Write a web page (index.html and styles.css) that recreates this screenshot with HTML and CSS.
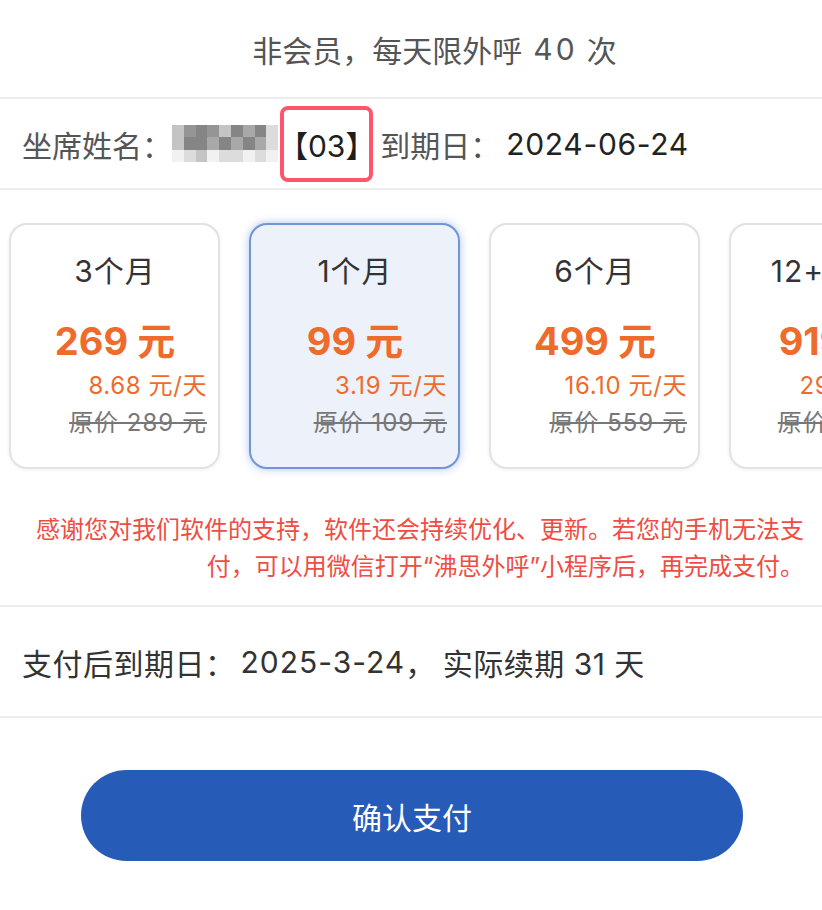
FILE: index.html
```html
<!DOCTYPE html>
<html lang="zh-CN">
<head>
<meta charset="utf-8">
<link rel="stylesheet" href="styles.css">
</head>
<body>
<div class="page">
  <div class="limit">非会员，每天限外呼<span class="count">40</span>次</div>
  <div class="divider"></div>
  <div class="seat">
    <span class="label">坐席姓名：</span>
    <span class="mosaic">
      <i class="m2"></i><i class="m4"></i><i class="m5"></i><i class="m4"></i><i class="m2"></i><i class="m5"></i><i class="m3"></i><i class="m5"></i><i class="m1"></i>
      <i class="m2"></i><i class="m5"></i><i class="m5"></i><i class="m3"></i><i class="m5"></i><i class="m3"></i><i class="m5"></i><i class="m3"></i><i class="m1"></i>
      <i class="m0"></i><i class="m1"></i><i class="m2"></i><i class="m0"></i><i class="m1"></i><i class="m1"></i><i class="m0"></i><i class="m1"></i><i class="m0"></i>
    </span>
    <span class="code">【03】</span>
    <span class="label">到期日：</span>
    <span class="date">2024-06-24</span>
  </div>
  <div class="divider"></div>
  <div class="plans">
    <div class="plan">
      <div class="plan-name">3个月</div>
      <div class="plan-price">269 元</div>
      <div class="plan-day">8.68 元/天</div>
      <div class="plan-orig">原价 289 元</div>
    </div>
    <div class="plan selected">
      <div class="plan-name">1个月</div>
      <div class="plan-price">99 元</div>
      <div class="plan-day">3.19 元/天</div>
      <div class="plan-orig">原价 109 元</div>
    </div>
    <div class="plan">
      <div class="plan-name">6个月</div>
      <div class="plan-price">499 元</div>
      <div class="plan-day">16.10 元/天</div>
      <div class="plan-orig">原价 559 元</div>
    </div>
    <div class="plan">
      <div class="plan-name">12+1个月</div>
      <div class="plan-price">919 元</div>
      <div class="plan-day">29.10 元/月</div>
      <div class="plan-orig">原价 1099 元</div>
    </div>
  </div>
  <div class="notice">感谢您对我们软件的支持，软件还会持续优化、更新。若您的手机无法支付，可以用微信打开“沸思外呼”小程序后，再完成支付。</div>
  <div class="divider"></div>
  <div class="after">支付后到期日：<span class="after-date">2025-3-24</span>，<span class="after-days">实际续期 31 天</span></div>
  <div class="divider"></div>
  <div class="action">
    <button class="pay">确认支付</button>
  </div>
</div>
</body>
</html>
```

FILE: styles.css
```css
* { box-sizing: border-box; }
html, body {
  margin: 0;
  padding: 0;
  background: #fff;
}
body {
  font-family: "Inter", "Noto Sans CJK SC", sans-serif;
  color: #333;
}
.page {
  width: 822px;
  overflow: hidden;
}
.divider {
  height: 2px;
  background: #ededed;
}
.limit {
  height: 97px;
  display: flex;
  align-items: center;
  justify-content: center;
  padding-left: 47px;
  font-size: 30px;
  color: #555;
}
.count {
  padding: 0 9px 0 11px;
  letter-spacing: 3px;
}
.seat {
  height: 89px;
  display: flex;
  align-items: center;
  padding-left: 22px;
  font-size: 30px;
}
.label { color: #555; }
.date {
  color: #222;
  margin-left: 6px;
  letter-spacing: 0.7px;
}
.mosaic {
  display: grid;
  grid-template-columns: repeat(9, 11.8px);
  grid-template-rows: repeat(3, 12.5px);
  margin-left: 0;
  margin-right: 2px;
}
.mosaic i { display: block; }
.m0 { background: #f1f1f1; }
.m1 { background: #dcdcdc; }
.m2 { background: #c4c4c4; }
.m3 { background: #a8a8a8; }
.m4 { background: #959595; }
.m5 { background: #858585; }
.code {
  color: #1e1e1e;
  border: 4px solid #ff5469;
  border-radius: 8px;
  height: 76px;
  width: 93px;
  display: flex;
  align-items: center;
  justify-content: center;
  margin-right: 7px;
}
.plans {
  display: flex;
  gap: 29px;
  padding: 33px 0 0 9px;
}
.plan {
  flex: 0 0 auto;
  width: 211px;
  height: 246px;
  border: 2px solid #e2e2e2;
  border-radius: 18px;
  background: #fff;
  box-shadow: 0 1px 4px rgba(0,0,0,0.06);
  display: flex;
  flex-direction: column;
  padding: 0 11px 0 12px;
}
.plan.selected {
  background: #edf1fa;
  border-color: #7096d8;
  box-shadow: 0 0 9px rgba(95,135,215,0.5);
}
.plan-name {
  margin-top: 26px;
  text-align: center;
  font-size: 30px;
  line-height: 40px;
  letter-spacing: 1px;
  color: #333;
}
.plan-price {
  margin-top: 27px;
  text-align: center;
  font-size: 38px;
  line-height: 46px;
  font-weight: 700;
  color: #ef6b2c;
}
.plan-day {
  text-align: right;
  font-size: 24px;
  line-height: 38px;
  margin-top: 3px;
  letter-spacing: 0.6px;
  color: #ef6b2c;
}
.plan-orig {
  text-align: right;
  font-size: 24px;
  line-height: 36px;
  letter-spacing: 1px;
  color: #777;
  text-decoration: line-through;
  text-decoration-thickness: 2px;
  text-decoration-color: #777;
}
.notice {
  padding: 42px 18px 20px 22px;
  text-align: right;
  font-size: 24px;
  line-height: 37px;
  color: #ef4d43;
}
.after {
  height: 109px;
  display: flex;
  align-items: center;
  padding-left: 22px;
  font-size: 30px;
  letter-spacing: 0.5px;
  color: #333;
}
.after-date {
  margin-left: 5px;
  letter-spacing: 1px;
}
.after-days {
  margin-left: 7px;
  white-space: pre;
}
.action {
  padding-top: 52px;
  display: flex;
  justify-content: center;
}
.pay {
  width: 662px;
  height: 91px;
  margin-left: 2px;
  border: none;
  border-radius: 46px;
  background: #275bb8;
  color: #fff;
  font-family: "Inter", "Noto Sans CJK SC", sans-serif;
  font-size: 30px;
}
```
